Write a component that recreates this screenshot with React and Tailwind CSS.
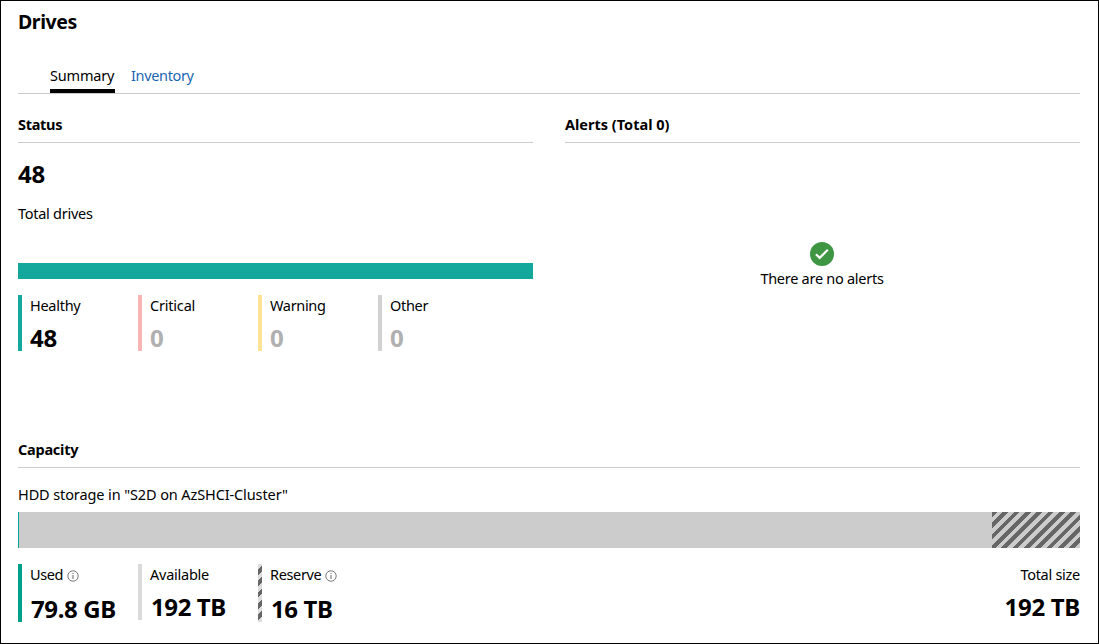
import React from "react";

function SectionHeader({ title, tracking }) {
  return (
    <h2 className={`h-[29px] border-b border-[#cccccc] text-[14.5px] leading-5 font-bold ${tracking}`}>
      <span>{title}</span>
    </h2>
  );
}

function StatusItem({ label, value, bar, color, tracking }) {
  return (
    <div className="flex h-14 w-[120px]">
      <div className={`w-1 ${bar}`} />
      <div className="pl-2">
        <div className={`text-[14.5px] leading-5 ${tracking}`}>{label}</div>
        <div className={`mt-2 text-[24px] leading-[29px] font-bold tracking-[-0.3px] ${color}`}>{value}</div>
      </div>
    </div>
  );
}

function InfoIcon() {
  return (
    <svg className="mt-[6px] ml-1 h-3 w-3" viewBox="0 0 12 12" fill="none" stroke="#555555">
      <circle cx="6" cy="6" r="5.2" strokeWidth="0.8" />
      <path d="M6 5v4M6 3v1" strokeWidth="0.9" />
    </svg>
  );
}

function CapacityItem({ label, value, bar, info, size, tracking }) {
  return (
    <div className={`flex w-[120px] ${size}`}>
      <div className={`w-1 ${bar}`} />
      <div className="pl-2 whitespace-nowrap">
        <div className="flex text-[14.5px] leading-5">
          <span className={tracking}>{label}</span>
          {info && <InfoIcon />}
        </div>
        <div className={`pl-px text-[24px] leading-[29px] font-bold tracking-[-0.4px] ${info ? "mt-[10px]" : "mt-2"}`}>
          {value}
        </div>
      </div>
    </div>
  );
}

export default function App() {
  return (
    <main className="flex h-[644px] w-[1099px] flex-col border border-black bg-white pt-[7px] pr-[18px] pl-[17px] font-['Noto_Sans','Open_Sans',sans-serif] text-black">
      <h1 className="h-7 text-[19.5px] leading-7 font-bold tracking-[-0.4px]">Drives</h1>

      <nav className="mt-[29px] flex h-[29px] gap-4 border-b border-[#cccccc] pl-8 text-[14.5px] leading-5">
        <a className="h-7 w-[65px] border-b-4 border-black tracking-[-0.2px]">Summary</a>
        <a className="tracking-[-0.35px] text-[#1a66b3]">Inventory</a>
      </nav>

      <div className="mt-5 grid h-[325px] grid-cols-2 gap-8">
        <section>
          <SectionHeader title="Status" tracking="tracking-[-0.3px]" />
          <div className="mt-[15px] text-[24px] leading-8 font-bold tracking-[-0.3px]">48</div>
          <div className="mt-[13px] text-[14.5px] leading-5 tracking-[-0.27px]">Total drives</div>
          <div className="mt-10 h-4 bg-[#14a89d]" />
          <div className="mt-4 flex">
            <StatusItem label="Healthy" value="48" bar="bg-[#14a89d]" color="text-black" tracking="tracking-[-0.28px]" />
            <StatusItem label="Critical" value="0" bar="bg-[#fbb4b4]" color="text-[#b0b0b0]" tracking="tracking-[-0.2px]" />
            <StatusItem label="Warning" value="0" bar="bg-[#fde395]" color="text-[#b0b0b0]" tracking="tracking-[-0.33px]" />
            <StatusItem label="Other" value="0" bar="bg-[#d2d2d2]" color="text-[#b0b0b0]" tracking="tracking-[-0.3px]" />
          </div>
        </section>
        <section>
          <SectionHeader title="Alerts (Total 0)" tracking="tracking-[0px]" />
          <div className="mt-[99px] flex flex-col items-center pr-px">
            <svg className="h-6 w-6" viewBox="0 0 24 24">
              <circle cx="12" cy="12" r="12" fill="#3f9642" />
              <path d="M6 12.3l3.6 3.6L17.8 7.8" fill="none" stroke="white" strokeWidth="2.2" />
            </svg>
            <div className="mt-[2px] text-[14.5px] leading-5 tracking-[-0.27px]">There are no alerts</div>
          </div>
        </section>
      </div>

      <section>
        <SectionHeader title="Capacity" tracking="tracking-[-0.25px]" />
        <div className="mt-4 text-[14.5px] leading-5 tracking-[-0.11px]">HDD storage in "S2D on AzSHCI-Cluster"</div>
        <div className="mt-2 flex h-9">
          <div className="w-px bg-[#00a693]" />
          <div className="flex-1 bg-[#cccccc]" />
          <div className="w-[88px] bg-[repeating-linear-gradient(-45deg,#cccccc_0px,#cccccc_4px,#666666_4px,#666666_8px)]" />
        </div>
        <div className="mt-4 flex items-start">
          <CapacityItem label="Used" value="79.8 GB" bar="bg-[#00a18a]" info size="h-[58px]" tracking="tracking-[-0.4px]" />
          <CapacityItem label="Available" value="192 TB" bar="bg-[#dadada]" size="h-14" tracking="tracking-[-0.24px]" />
          <CapacityItem label="Reserve" value="16 TB" bar="bg-[repeating-linear-gradient(-45deg,#dddddd_0px,#dddddd_4px,#666666_4px,#666666_8px)]" info size="h-[58px]" tracking="tracking-[-0.35px]" />
          <div className="ml-auto flex h-14 flex-col items-end">
            <div className="text-[14.5px] leading-5 tracking-[-0.28px]">Total size</div>
            <div className="mt-2 text-[24px] leading-[29px] font-bold tracking-[-0.3px]">192 TB</div>
          </div>
        </div>
      </section>
    </main>
  );
}
